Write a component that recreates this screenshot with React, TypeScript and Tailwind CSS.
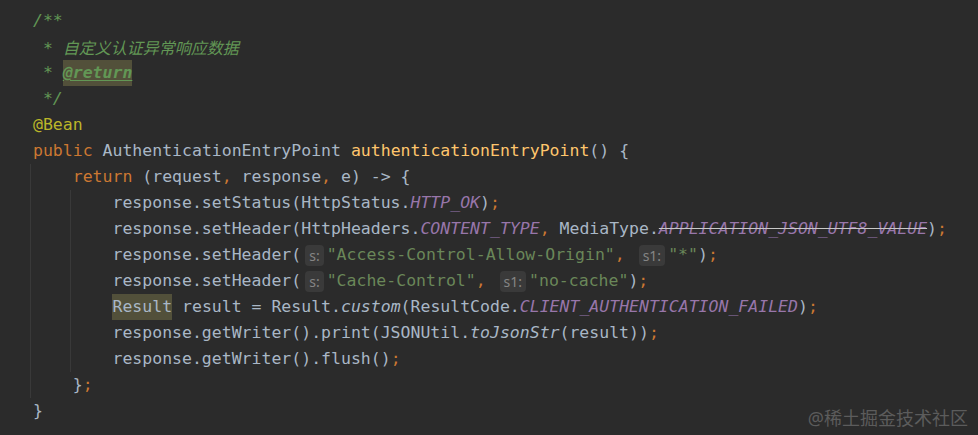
import type { FC, ReactNode } from "react";

const Kw: FC<{ children: ReactNode }> = ({ children }) => <span className="text-[#cc7832]">{children}</span>;
const Field: FC<{ children: ReactNode; deprecated?: boolean }> = ({ children, deprecated }) => (
    <span
        className={
            "italic text-[#9876aa]" + (deprecated ? " line-through decoration-[#c8c8c8]" : "")
        }
    >
        {children}
    </span>
);
const Str: FC<{ children: ReactNode }> = ({ children }) => <span className="text-[#6a8759]">{children}</span>;
const Doc: FC<{ children: ReactNode }> = ({ children }) => <span className="italic text-[#629755]">{children}</span>;

// inlay parameter hint, e.g. "s:"
const Hint: FC<{ label: string }> = ({ label }) => (
    <span className="ml-[4px] mr-[3px] inline-flex h-[21px] items-center rounded-[4px] bg-[#3a3a3a] px-[4px] align-middle font-['Noto_Sans',sans-serif] text-[14px] leading-[21px] not-italic text-[#858585]">
        {label}
    </span>
);

type Line = { indent: number; guides: number[]; content: ReactNode };

const lines: Line[] = [
    { indent: 0, guides: [], content: <Doc>/**</Doc> },
    {
        indent: 0,
        guides: [],
        content: (
            <Doc>
                {" * "}
                <span className="font-['Noto_Sans_CJK_SC',sans-serif] text-[16px]">自定义认证异常响应数据</span>
            </Doc>
        ),
    },
    {
        indent: 0,
        guides: [],
        content: (
            <Doc>
                {" * "}
                <span className="inline-block bg-[#52503a] font-bold underline decoration-[#629755] underline-offset-2">
                    @return
                </span>
            </Doc>
        ),
    },
    { indent: 0, guides: [], content: <Doc>{" */"}</Doc> },
    { indent: 0, guides: [], content: <span className="text-[#bbb529]">@Bean</span> },
    {
        indent: 0,
        guides: [],
        content: (
            <>
                <Kw>public</Kw> AuthenticationEntryPoint{" "}
                <span className="text-[#ffc66d]">authenticationEntryPoint</span>() {"{"}
            </>
        ),
    },
    {
        indent: 1,
        guides: [0],
        content: (
            <>
                <Kw>return</Kw> (request<Kw>,</Kw> response<Kw>,</Kw> e) -&gt; {"{"}
            </>
        ),
    },
    {
        indent: 2,
        guides: [0, 1],
        content: (
            <>
                response.setStatus(HttpStatus.<Field>HTTP_OK</Field>)<Kw>;</Kw>
            </>
        ),
    },
    {
        indent: 2,
        guides: [0, 1],
        content: (
            <>
                response.setHeader(HttpHeaders.<Field>CONTENT_TYPE</Field>
                <Kw>,</Kw> MediaType.<Field deprecated>APPLICATION_JSON_UTF8_VALUE</Field>)<Kw>;</Kw>
            </>
        ),
    },
    {
        indent: 2,
        guides: [0, 1],
        content: (
            <>
                response.setHeader(
                <Hint label="s:" />
                <Str>"Access-Control-Allow-Origin"</Str>
                <Kw>, </Kw>
                <Hint label="s1:" />
                <Str>"*"</Str>)<Kw>;</Kw>
            </>
        ),
    },
    {
        indent: 2,
        guides: [0, 1],
        content: (
            <>
                response.setHeader(
                <Hint label="s:" />
                <Str>"Cache-Control"</Str>
                <Kw>, </Kw>
                <Hint label="s1:" />
                <Str>"no-cache"</Str>)<Kw>;</Kw>
            </>
        ),
    },
    {
        indent: 2,
        guides: [0, 1],
        content: (
            <>
                <span className="inline-block bg-[#52503a]">Result</span> result = Result.
                <span className="italic">custom</span>(ResultCode.<Field>CLIENT_AUTHENTICATION_FAILED</Field>)
                <Kw>;</Kw>
            </>
        ),
    },
    {
        indent: 2,
        guides: [0, 1],
        content: (
            <>
                response.getWriter().print(JSONUtil.<span className="italic">toJsonStr</span>(result))<Kw>;</Kw>
            </>
        ),
    },
    {
        indent: 2,
        guides: [0, 1],
        content: (
            <>
                response.getWriter().flush()<Kw>;</Kw>
            </>
        ),
    },
    {
        indent: 1,
        guides: [0],
        content: (
            <>
                {"}"}
                <Kw>;</Kw>
            </>
        ),
    },
    { indent: 0, guides: [], content: <>{"}"}</> },
];

const CodeLine: FC<{ line: Line }> = ({ line }) => (
    <div className="flex h-[26px] items-stretch whitespace-pre leading-[26px]">
        {Array.from({ length: line.indent }).map((_, i) => (
            <div key={i} className="relative w-[4ch] flex-none">
                {line.guides.includes(i) && <div className="absolute bottom-0 left-[-3px] top-0 w-px bg-[#393939]" />}
            </div>
        ))}
        <span className="inline-block">{line.content}</span>
    </div>
);

const App: FC = () => {
    return (
        <div className="relative h-[435px] w-[978px] overflow-hidden bg-[#2b2b2b] pl-[33px] pt-[8px] font-['DejaVu_Sans_Mono',monospace] text-[16.5px] text-[#a9b7c6]">
            {lines.map((line, i) => (
                <CodeLine key={i} line={line} />
            ))}
            <div className="absolute bottom-[5px] right-[10px] font-['Noto_Sans',_'Noto_Sans_CJK_SC',sans-serif] text-[18px] leading-[24px] text-[#5c5c5c]">
                @稀土掘金技术社区
            </div>
        </div>
    );
};

export default App;
